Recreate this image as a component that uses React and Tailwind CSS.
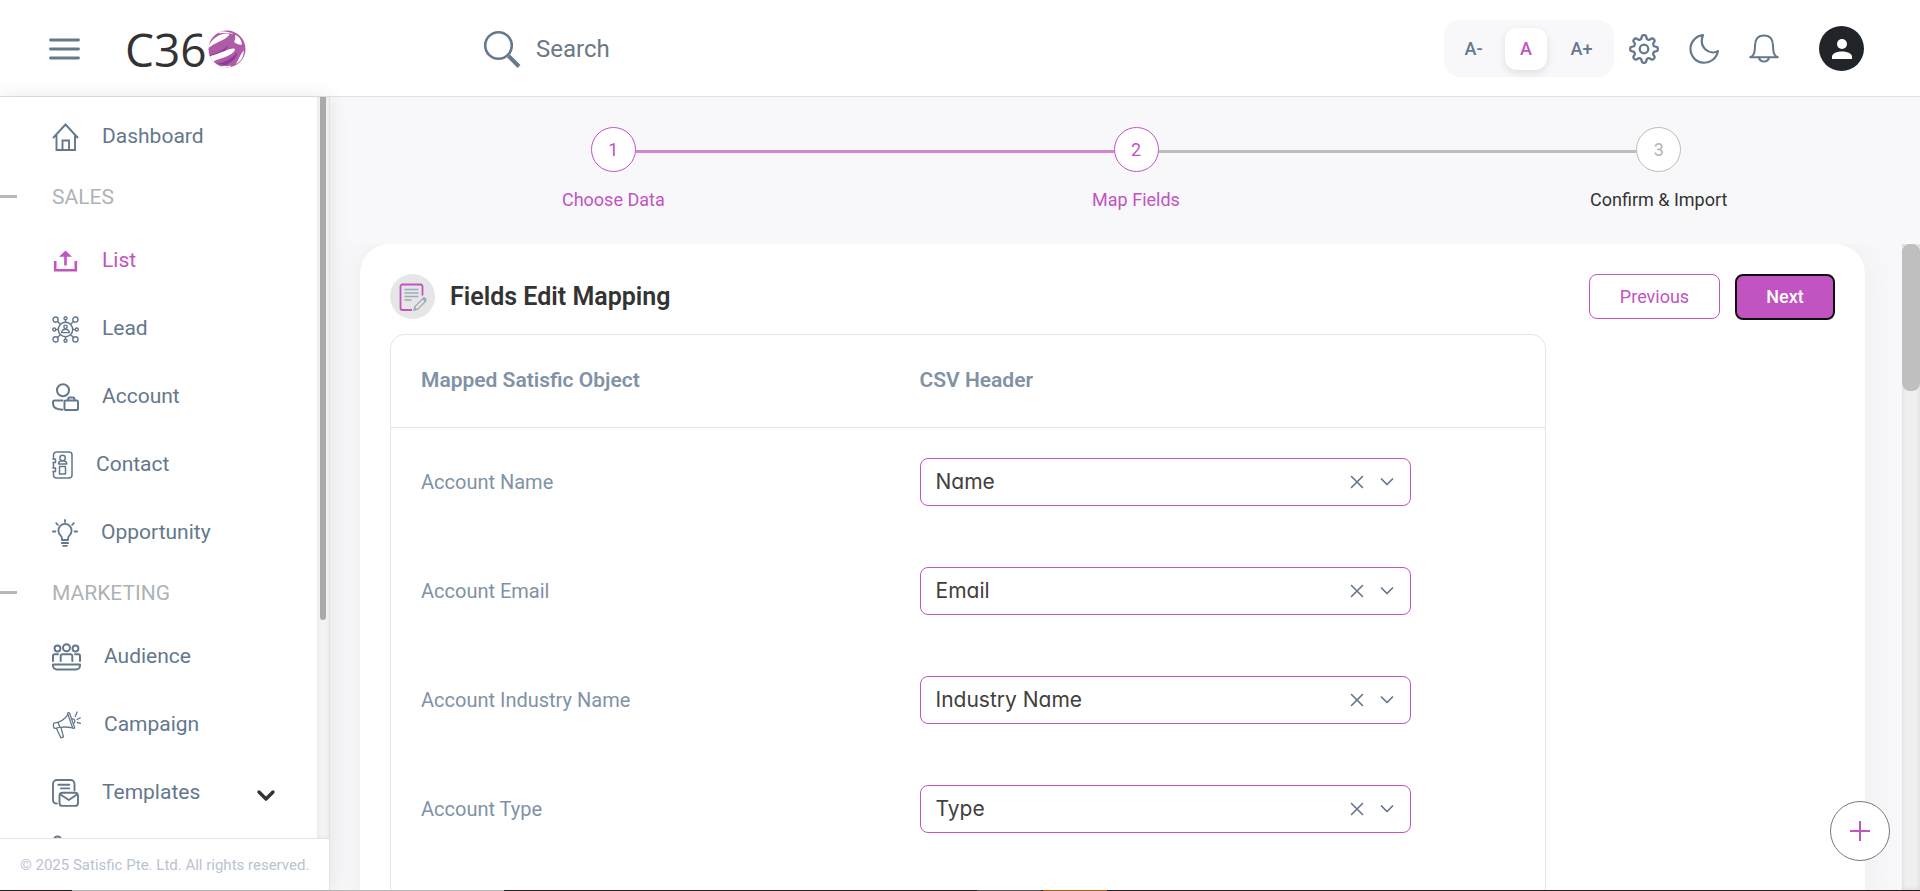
import React from "react";

const gearPath = (() => {
  const pts = [];
  for (let i = 0; i < 240; i++) {
    const t = (i / 240) * Math.PI * 2;
    const k = Math.tanh(Math.cos(8 * t) * 1.8) / Math.tanh(1.8);
    const r = 12 + 1.8 * k;
    pts.push(`${(15 + r * Math.sin(t)).toFixed(2)} ${(15 - r * Math.cos(t)).toFixed(2)}`);
  }
  return `M${pts.join("L")}Z`;
})();

function Icon({ w, h, sw = 2, children, className = "" }) {
  return (
    <svg
      width={w}
      height={h}
      viewBox={`0 0 ${w} ${h}`}
      fill="none"
      stroke="currentColor"
      strokeWidth={sw}
      strokeLinecap="round"
      strokeLinejoin="round"
      aria-hidden="true"
      className={`shrink-0 ${className}`}
    >
      {children}
    </svg>
  );
}

const HomeIcon = () => (
  <Icon w={27} h={28} sw={1.9}>
    <path d="M1.5 14.5 13.5 1.5l12 13M4.500 12v15h18.500V12M10.500 27V17.500h6.500v9.500" strokeLinejoin="miter" />
  </Icon>
);

const ListIcon = () => (
  <Icon w={27} h={28} sw={2.6}>
    <path d="M3.2 14v9.200h20.600V14" strokeLinecap="butt" strokeLinejoin="miter" />
    <path d="M13.5 18.5V8" strokeLinecap="butt" />
    <path d="M13.5 3.500 20 9.800H7z" fill="currentColor" stroke="none" />
  </Icon>
);

const LeadIcon = () => (
  <Icon w={27} h={27} sw={1.4}>
    <circle cx="13.5" cy="13.5" r="7.2" />
    <circle cx="3.6" cy="3.6" r="2.6" />
    <circle cx="23.4" cy="3.6" r="2.6" />
    <circle cx="3.6" cy="23.4" r="2.6" />
    <circle cx="23.4" cy="23.4" r="2.6" />
    <circle cx="13.5" cy="2.2" r="1.5" />
    <circle cx="13.5" cy="24.8" r="1.5" />
    <circle cx="2.2" cy="13.5" r="1.5" />
    <circle cx="24.8" cy="13.5" r="1.5" />
    <path d="M5.5 5.5l2.8 2.8M21.5 5.5l-2.8 2.8M5.5 21.5l2.8-2.8M21.5 21.5l-2.8-2.8M13.5 3.8v2.4M13.5 20.8v2.4M3.8 13.5h2.4M20.8 13.5h2.4" />
    <circle cx="13.5" cy="10.8" r="1.7" />
    <path d="M9.6 16.6c.3-2.3 1.6-3.4 3.9-3.4s3.600 1.100 3.900 3.400z" />
  </Icon>
);

const AccountIcon = () => (
  <Icon w={27} h={28} sw={2}>
    <circle cx="11" cy="7.200" r="6" />
    <path d="M10.500 17.500H2.800a1.800 1.800 0 0 0-1.800 1.800v1.200c0 3.800 4 6 9.500 6.200" />
    <rect x="12.500" y="17.500" width="13.500" height="9.500" rx="1.200" />
    <path d="M16.200 17.200v-1.200a1.400 1.400 0 0 1 1.400-1.400h3.400a1.400 1.400 0 0 1 1.400 1.400v1.200" />
  </Icon>
);

const ContactIcon = () => (
  <Icon w={21} h={28} sw={1.5}>
    <path d="M1.500 8V4a3 3 0 0 1 3-3h12.500a3 3 0 0 1 3 3v20a3 3 0 0 1-3 3H4.500a3 3 0 0 1-3-3v-3.500M1.500 11.500v5.500" />
    <path d="M1 8h2.500v3.500H1M1 17h2.500v3.500H1" />
    <circle cx="10.600" cy="7" r="2.700" />
    <path d="M6.500 13c0-2.200 1.200-3.300 4.100-3.300s4.100 1.100 4.100 3.300zM7.500 15.500h6v7.500h-6z" />
  </Icon>
);

const BulbIcon = () => (
  <Icon w={26} h={28} sw={1.8}>
    <path d="M10 21v-1.500c0-1.400-.6-2.200-1.500-3.200a6.600 6.600 0 1 1 9 0c-.9 1-1.500 1.800-1.500 3.200V21z" />
    <path d="M9.800 24h6.400M11 26.800h4M13 .9v2.200M4.200 4.200l1.600 1.600M21.800 4.200l-1.600 1.600M.9 12.500h2.500M22.600 12.500h2.500" />
  </Icon>
);

const AudienceIcon = () => (
  <Icon w={29} h={28} sw={2}>
    <circle cx="5.500" cy="5.500" r="2.900" />
    <circle cx="14.500" cy="4.700" r="3.500" />
    <circle cx="23.500" cy="5.500" r="2.900" />
    <path d="M1 18v-5.200a1.600 1.600 0 0 1 1.600-1.600H6M28 18v-5.200a1.600 1.600 0 0 0-1.600-1.600H23M8.700 18v-5a1.800 1.800 0 0 1 1.800-1.800h8a1.800 1.800 0 0 1 1.800 1.800v5" />
    <path d="M1 21.500h27v1a4 4 0 0 1-4 4H5a4 4 0 0 1-4-4z" />
  </Icon>
);

const CampaignIcon = () => (
  <Icon w={29} h={28} sw={1.3}>
    <path d="M15.600 2.600c.1-1 1.500-1.300 1.900-.4l5.100 14.200c.2 1-1.300 1.500-1.900.6z" />
    <path d="M15.600 3.800C13 8 9 11 2.200 12.200c-1.300.6-1 4 .4 5.300 6-1.800 12-1.900 17.800-.7M6 11.300l1.900 5" />
    <path d="M4.500 17.500 8.800 26.800l2.700-1-2.500-9.100M20.300 8c2.200-.4 3.500 2.200 1.800 4" />
    <path d="M23.200 5.500l2-4.500M25 8.500l3.200-1.600M25.200 11.500l3.200.9" />
  </Icon>
);

const TemplatesIcon = () => (
  <Icon w={27} h={28} sw={1.900}>
    <path d="M4.800 24.500C2.500 24.500 1 23.500 1 21V5a4 4 0 0 1 4-4h13.500a4 4 0 0 1 4 4v6.500" />
    <path d="M6.300 5.800h11M9 9.400h8.300" />
    <rect x="7.500" y="13.700" width="18.500" height="13.200" rx="3" />
    <path d="m8.500 15.500 8.300 5.500 8.200-5.500" />
  </Icon>
);

const SECTIONS = [
  {
    title: "SALES",
    items: [
      { label: "List", icon: ListIcon, active: true },
      { label: "Lead", icon: LeadIcon },
      { label: "Account", icon: AccountIcon },
      { label: "Contact", icon: ContactIcon },
      { label: "Opportunity", icon: BulbIcon },
    ],
  },
  {
    title: "MARKETING",
    items: [
      { label: "Audience", icon: AudienceIcon },
      { label: "Campaign", icon: CampaignIcon },
      { label: "Templates", icon: TemplatesIcon, expandable: true },
    ],
  },
];

const FIELDS = [
  { id: "account-name", label: "Account Name", value: "Name" },
  { id: "account-email", label: "Account Email", value: "Email" },
  { id: "account-industry", label: "Account Industry Name", value: "Industry Name" },
  { id: "account-type", label: "Account Type", value: "Type" },
];

function Logo() {
  return (
    <a href="#home" aria-label="C360" className="flex items-center text-[#333333]">
      <span className="font-['Open_Sans',sans-serif] text-[46px] leading-[46px]">C36</span>
      <svg width="40" height="40" viewBox="0 0 40 40" aria-hidden="true">
        <defs>
          <clipPath id="globe">
            <circle cx="20" cy="20" r="18.500" />
          </clipPath>
        </defs>
        <g clipPath="url(#globe)">
          <rect width="40" height="40" fill="#ae5ca6" />
          <path d="M2 26c8-1 15-5 19-10-2 7-9 12-17 14z" fill="#8f3b97" />
          <path d="M8 35c9-1 17-5 22-12 0 6-5 10-11 13z" fill="#8f3b97" />
          <path d="M.500 20C3 11 12 4 21 4.500c1.500.2 1.500 1.200.5 2.300C17 12 8 13 .500 20z" fill="#fff" />
          <path d="M0 31c1-4 6-5 10-6 6-2 11-5 16-5.500 2.500 0 2.500 1.500.5 3.500-5 5-11 5.500-17 8-3 1.200-5 3-6 5z" fill="#fff" />
          <path d="M28 6c4 1 6.500 5 7 9.500-2.500.5-5.500-.5-8-2.500 1.200-2 1.500-4.500 1-7z" fill="#fff" />
          <path d="M36.500 21.500c1 5-2.500 11-7.500 13.500 2-3.500 4-9 7.500-13.500z" fill="#fff" />
          <path d="M11 38c4-1.500 9-.5 13-1.500l-2 3.500H11z" fill="#fff" />
          <path d="M12 2.500c5-.5 10 .5 15 2.500-5-.8-10-1.500-15-.5z" fill="#fff" />
        </g>
      </svg>
    </a>
  );
}

function Header() {
  return (
    <header className="flex h-[97px] shrink-0 items-center border-b border-[#e2e2e2] bg-white pt-px pr-14 pl-12 text-[#64788e]">
      <button type="button" aria-label="Toggle menu">
        <Icon w={32} h={24} sw={2.800}>
          <path d="M2.500 3h28M2.500 12h28M2.500 21h28" />
        </Icon>
      </button>
      <div className="ml-[45px] w-[358px]">
        <Logo />
      </div>
      <label className="flex flex-1 items-center gap-[15px]">
        <Icon w={38} h={38} sw={2.600}>
          <circle cx="15.500" cy="15.500" r="13.300" />
          <path d="M25.500 26l10.500 10.500" strokeWidth="4" strokeLinecap="butt" />
        </Icon>
        <input
          type="search"
          placeholder="Search"
          aria-label="Search"
          className="w-full bg-transparent text-2xl outline-none placeholder:text-[#6b7886]"
        />
      </label>
      <div className="flex h-[57px] items-center gap-2.5 rounded-2xl bg-[#f8f8fb] px-2 text-lg font-medium">
        <button type="button" className="h-[42px] w-[43px]">A-</button>
        <button type="button" className="h-[42px] w-[42px] rounded-xl bg-white text-[#c154c1] shadow-[0_3px_8px_rgba(0,0,0,0.1)]">A</button>
        <button type="button" className="h-[42px] w-[49px]">A+</button>
      </div>
      <div className="ml-[15px] flex items-center gap-[30px]">
        <button type="button" aria-label="Settings">
          <Icon w={30} h={30} sw={2.300}>
            <path d={gearPath} />
            <circle cx="15" cy="15" r="4.300" />
          </Icon>
        </button>
        <button type="button" aria-label="Dark mode">
          <Icon w={30} h={30} sw={2.200}>
            <path d="M14 1.200A13.800 13.800 0 1 0 28.900 17.100c-8.200 4.600-19.700-3.700-14.900-15.900z" />
          </Icon>
        </button>
        <button type="button" aria-label="Notifications">
          <Icon w={30} h={30} sw={2}>
            <path d="M1.200 23.200c3.300-.8 4.300-4 4.600-7.500l.3-5.200C6.400 5 9.500 1.600 15 1.600s8.600 3.400 8.900 8.900l.3 5.200c.3 3.500 1.300 6.700 4.600 7.500z" />
            <path d="M10 23.500c.8 5.300 9.200 5.300 10 0" />
          </Icon>
        </button>
      </div>
      <button type="button" aria-label="Profile" className="ml-10 flex size-[45px] items-center justify-center rounded-full bg-[#212529]">
        <svg width="20" height="20" viewBox="0 0 20 20" fill="#fff" aria-hidden="true">
          <circle cx="10" cy="5" r="5" />
          <path d="M0 20v-2.200C0 14.300 5.500 12.600 10 12.600s10 1.700 10 5.200V20z" />
        </svg>
      </button>
    </header>
  );
}

function NavItem({ label, icon: Glyph, active, expandable }) {
  return (
    <li>
      <a
        href={`#${label.toLowerCase()}`}
        className={`flex h-[68px] items-center gap-[23px] pr-[41px] pl-[52px] text-[21px] ${active ? "text-[#c154c1]" : "text-[#64788c]"}`}
      >
        <Glyph />
        {label}
        {expandable && (
          <Icon w={20} h={14} sw={3.400} className="mt-1.5 ml-auto text-[#333333]">
            <path d="m3 3 7 7 7-7" />
          </Icon>
        )}
      </a>
    </li>
  );
}

function Sidebar() {
  return (
    <aside className="z-10 flex w-[330px] shrink-0 flex-col border-r border-[#e2e2e2] bg-white shadow-[0_0_20px_rgba(0,0,0,0.09)]">
      <div className="flex min-h-0 flex-1">
        <nav className="flex-1 overflow-hidden pt-1.5">
          <ul>
            <NavItem label="Dashboard" icon={HomeIcon} />
          </ul>
          {SECTIONS.map((s) => (
            <section key={s.title}>
              <h2 className="flex h-14 items-center gap-[35px] pb-0.5 text-[21px] text-[#adb3b8]">
                <span className="mb-1 h-[3px] w-[17px] bg-[#b3b9bb]" />
                {s.title}
              </h2>
              <ul>
                {s.items.map((item) => (
                  <NavItem key={item.label} {...item} />
                ))}
              </ul>
            </section>
          ))}
          <div className="pt-2 pl-[52px] text-[#64788c]">
            <Icon w={27} h={28}>
              <circle cx="5.500" cy="5" r="3.500" />
            </Icon>
          </div>
        </nav>
        <div className="w-3 bg-[#f4f4f4] px-[3px] shadow-[inset_0_0_4px_rgba(0,0,0,0.08)]">
          <div className="h-[523px] rounded-b-full bg-[#aaaaaa]" />
        </div>
      </div>
      <footer className="flex h-[52px] shrink-0 items-center border-t border-[#e5e5e5] pt-0.5 pl-5 text-[15px] whitespace-nowrap text-[#b9c3d0]">
        © 2025 Satisfic Pte. Ltd. All rights reserved.
      </footer>
    </aside>
  );
}

function Stepper() {
  return (
    <ol className="ml-[22px] flex shrink-0 pt-[30px] pb-8 text-lg">
      <li className="flex flex-1 flex-col items-center gap-4 text-[#c154c1]">
        <div className="flex w-full items-center">
          <span className="flex-1" />
          <span className="flex size-[45px] items-center justify-center rounded-full border border-[#c154c1] bg-white">1</span>
          <span className="mt-1 h-[3px] flex-1 bg-[#d385d3]" />
        </div>
        <span className="leading-6">Choose Data</span>
      </li>
      <li className="flex flex-1 flex-col items-center gap-4 text-[#c154c1]">
        <div className="flex w-full items-center">
          <span className="mt-1 h-[3px] flex-1 bg-[#d385d3]" />
          <span className="flex size-[45px] items-center justify-center rounded-full border border-[#c154c1] bg-white">2</span>
          <span className="mt-1 h-[3px] flex-1 bg-[#bdbdbd]" />
        </div>
        <span className="leading-6">Map Fields</span>
      </li>
      <li className="flex flex-1 flex-col items-center gap-4 text-[#333333]">
        <div className="flex w-full items-center">
          <span className="mt-1 h-[3px] flex-1 bg-[#bdbdbd]" />
          <span className="flex size-[45px] items-center justify-center rounded-full border border-[#bdbdbd] bg-white text-[#b5b5b5]">3</span>
          <span className="flex-1" />
        </div>
        <span className="leading-6">Confirm &amp; Import</span>
      </li>
    </ol>
  );
}

function FieldSelect({ id, value }) {
  return (
    <div className="relative max-w-[491px] text-[#64748b]">
      <select
        id={id}
        defaultValue={value}
        className="block h-12 w-full appearance-none rounded-lg border border-[#c154c1] bg-white px-[15px] font-['Inter',sans-serif] text-[21px] text-[#404040] [font-feature-settings:'cv11','ss03']"
      >
        {FIELDS.map((f) => (
          <option key={f.value}>{f.value}</option>
        ))}
      </select>
      <button type="button" aria-label={`Clear ${value}`} className="absolute top-4 right-[46px]">
        <Icon w={16} h={16} sw={1.600}>
          <path d="m2.500 2.500 11 11m0-11-11 11" />
        </Icon>
      </button>
      <Icon w={16} h={16} sw={1.700} className="pointer-events-none absolute top-4 right-4">
        <path d="m2.500 5 5.500 5.500L13.500 5" />
      </Icon>
    </div>
  );
}

function MappingTable() {
  return (
    <div className="mt-[15px] w-4/5 rounded-t-[15px] border border-b-0 border-[#e5e5e5] pb-10">
      <table className="w-full table-fixed text-left text-[#7f92a6]">
        <thead>
          <tr className="h-[92px] border-b border-[#e5e5e5] text-[21px]">
            <th className="w-[43.2%] px-[30px] font-semibold">Mapped Satisfic Object</th>
            <th className="px-[30px] font-semibold">CSV Header</th>
          </tr>
        </thead>
        <tbody>
          {FIELDS.map((f) => (
            <tr key={f.id} className="h-[109px] text-xl">
              <td className="px-[30px]">
                <label htmlFor={f.id}>{f.label}</label>
              </td>
              <td className="px-[30px]">
                <FieldSelect id={f.id} value={f.value} />
              </td>
            </tr>
          ))}
        </tbody>
      </table>
    </div>
  );
}

export default function App() {
  return (
    <div className="flex h-screen flex-col overflow-hidden bg-[#f8f8fb] font-['Roboto',sans-serif]">
      <Header />
      <div className="flex min-h-0 flex-1">
        <Sidebar />
        <main className="flex min-w-0 flex-1 flex-col">
          <Stepper />
          <div className="flex min-h-0 flex-1">
            <div className="min-w-0 flex-1 overflow-hidden pr-[37px] pl-[30px]">
              <div className="min-h-full rounded-t-[30px] bg-white px-[30px] pt-[30px] shadow-[0_0_40px_rgba(0,0,0,0.05)]">
                <div className="flex h-[45px] items-center">
                  <span className="flex size-[45px] items-center justify-center rounded-full bg-[#e6e6e6]">
                    <svg width="28" height="28" viewBox="0 0 28 28" fill="none" aria-hidden="true">
                      <path d="M23.500 12.500V3.500a2 2 0 0 0-2-2H3.500a2 2 0 0 0-2 2V25a2 2 0 0 0 2 2H13" stroke="#c154c1" strokeWidth="1.800" />
                      <path d="M5.500 6.500h14M5.500 10h14M5.500 13.500h14M5.500 17h7" stroke="#9aaaba" strokeWidth="1.600" />
                      <path d="m16 23.500 8-8 2.700 2.700-8 8-3.700 1z" stroke="#9aaaba" strokeWidth="1.200" />
                      <path d="m23 15.500 1.500-1.200c1.500-.6 3.600 1.500 3 3L26 19zM14.500 27.500l1-3.700 2.700 2.700z" fill="#9aaaba" />
                    </svg>
                  </span>
                  <h1 className="ml-[15px] flex-1 text-[25px] font-semibold text-[#333333]">Fields Edit Mapping</h1>
                  <button type="button" className="h-[45px] w-[131px] rounded-lg border border-[#c154c1] bg-white text-lg text-[#c154c1]">
                    Previous
                  </button>
                  <button type="button" className="ml-[15px] h-[46px] w-[100px] rounded-lg border-2 border-[#101010] bg-[#c154c1] text-lg font-medium text-white">
                    Next
                  </button>
                </div>
                <MappingTable />
              </div>
            </div>
            <div className="w-[18px] shrink-0 bg-[#efefef] shadow-[inset_0_0_5px_rgba(0,0,0,0.1)]">
              <div className="h-[147px] rounded-lg bg-[#bfbfbf]" />
            </div>
          </div>
        </main>
      </div>
      <div className="flex h-px shrink-0 bg-[#231f20]">
        <span className="w-[72px]" />
        <span className="w-[432px] bg-[#b8b8b8]" />
        <span className="w-[473px]" />
        <span className="w-[64px] bg-[#5a5254]" />
        <span className="ml-0.5 w-[64px] bg-[#b0611c]" />
      </div>
      <button type="button" aria-label="Add" className="fixed right-[30px] bottom-[30px] z-20 flex size-[60px] items-center justify-center rounded-full border border-[#777777] bg-white text-[#c154c1]">
        <Icon w={22} h={22} sw={2}>
          <path d="M11 1v20M1 11h20" strokeLinecap="butt" />
        </Icon>
      </button>
    </div>
  );
}
